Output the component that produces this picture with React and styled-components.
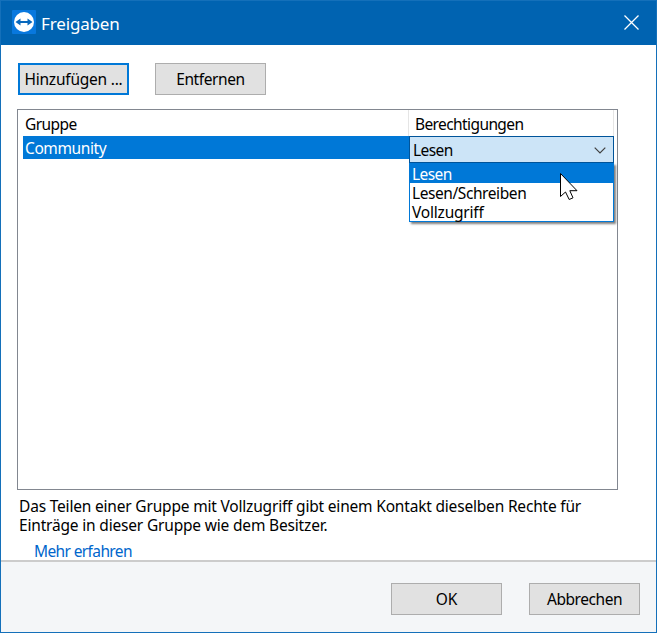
import React from 'react';
import styled, { createGlobalStyle, css } from 'styled-components';

const colors = {
	title: '#0063b1',
	frame: '#1470ba',
	accent: '#0078d7',
	link: '#0066cc',
	field: '#cce4f7',
	button: '#e1e1e1',
	buttonBorder: '#adadad',
	listBorder: '#828790',
	footer: '#f4f6f8'
};

const GlobalStyle = createGlobalStyle`
	* {
		box-sizing: border-box;
	}

	body {
		margin: 0;
		overflow: hidden;
	}
`;

const Dialog = styled.main`
	width: 657px;
	height: 633px;
	display: flex;
	flex-direction: column;
	border: 1px solid ${colors.frame};
	background: white;
	color: black;
	font: 15.5px/19px 'Noto Sans', sans-serif;
	white-space: nowrap;
`;

const Text = styled.span`
	display: block;
	width: max-content;
	letter-spacing: ${props => props.$spacing || 0}px;
`;

const TitleBar = styled.header`
	height: 44px;
	flex: none;
	display: flex;
	align-items: center;
	padding: 0 17px 2px 11px;
	background: ${colors.title};
	color: white;
`;

const Title = styled.h1`
	flex: 1;
	margin: 2px 0 0 5px;
	font-size: 17px;
	font-weight: 400;
`;

const CloseButton = styled.button`
	display: flex;
	padding: 0;
	border: 0;
	background: none;
`;

const Content = styled.section`
	height: 515px;
	flex: none;
	padding: 18px 38px 0 16px;
`;

const Toolbar = styled.div`
	display: flex;
	gap: 26px;
	padding-left: 1px;
`;

const Button = styled.button`
	width: 111px;
	height: 32px;
	display: flex;
	align-items: center;
	justify-content: center;
	padding: 0;
	border: 1px solid ${colors.buttonBorder};
	background: ${colors.button};
	color: black;
	font: inherit;
	${props =>
		props.$focused &&
		css`
			border: 2px solid ${colors.accent};
		`};
`;

const List = styled.div`
	height: 381px;
	display: grid;
	grid-template-columns: 386px 205px;
	grid-template-rows: 26px 27px;
	margin-top: 14px;
	padding-left: 5px;
	border: 1px solid ${colors.listBorder};
`;

const ColumnHeader = styled.div`
	padding: 5px 0 0 2px;
	${props =>
		props.$divided &&
		css`
			margin-left: -1px;
			padding-left: 6px;
			border-left: 1px solid #e5e5e5;
			border-right: 1px solid #e5e5e5;
		`};
`;

const SelectedCell = styled.div`
	height: 23px;
	padding: 3px 2px;
	background: ${colors.accent};
	color: white;
`;

const Select = styled.div`
	position: relative;
	height: 27px;
	display: flex;
	align-items: center;
	justify-content: space-between;
	padding: 1px 7px 0 3px;
	border: 1px solid #00549a;
	background: ${colors.field};
`;

const Options = styled.div`
	position: absolute;
	top: 26px;
	left: -1px;
	width: 205px;
	height: 59px;
	border: 1px solid ${colors.accent};
	background: white;
	box-shadow: 2px 2px 2px rgba(0, 0, 0, 0.5);
`;

const Option = styled.div`
	height: 19px;
	padding: 2px 0 0 2px;
	background: ${props => (props.$active ? colors.accent : 'white')};
	color: ${props => (props.$active ? 'white' : 'black')};
	line-height: 17px;
`;

const Cursor = styled.svg`
	position: absolute;
	top: 35px;
	left: 149px;
	z-index: 1;
`;

const Hint = styled.p`
	margin: 7px 0 0 2px;
`;

const Link = styled.a`
	display: block;
	margin: 7px 0 0 17px;
	color: ${colors.link};
`;

const Footer = styled.footer`
	flex: 1;
	display: flex;
	justify-content: flex-end;
	gap: 27px;
	padding: 21px 16px 0 0;
	border-top: 2px solid #cccccc;
	background: ${colors.footer};
`;

const AppIcon = () => (
	<svg width="24" height="24" viewBox="0 0 24 24">
		<rect width="24" height="24" rx="1" fill="#0878de" />
		<circle cx="12" cy="12" r="10" fill="white" />
		<path d="M3.5 12 8.5 8.5V11H15.5V8.5L20.5 12 15.5 15.5V13H8.5V15.5Z" fill="#0868bd" />
	</svg>
);

const CloseIcon = () => (
	<svg width="15" height="15" viewBox="0 0 15 15">
		<path d="M.5.5 14.5 14.5M14.5.5.5 14.5" stroke="white" strokeWidth="1.3" />
	</svg>
);

const Chevron = () => (
	<svg width="12" height="7" viewBox="0 0 12 7">
		<path d="M.7.7 6 6 11.3.7" fill="none" stroke="#404040" strokeWidth="1.2" />
	</svg>
);

const App = () => (
	<>
		<GlobalStyle />
		<Dialog>
			<TitleBar>
				<AppIcon />
				<Title>
					<Text $spacing={-0.15}>Freigaben</Text>
				</Title>
				<CloseButton aria-label="Schließen">
					<CloseIcon />
				</CloseButton>
			</TitleBar>
			<Content>
				<Toolbar>
					<Button $focused>
						<Text $spacing={-0.22}>Hinzufügen ...</Text>
					</Button>
					<Button>
						<Text $spacing={-0.4}>Entfernen</Text>
					</Button>
				</Toolbar>
				<List>
					<ColumnHeader>
						<Text $spacing={-0.55}>Gruppe</Text>
					</ColumnHeader>
					<ColumnHeader $divided>
						<Text $spacing={-0.6}>Berechtigungen</Text>
					</ColumnHeader>
					<SelectedCell>
						<Text $spacing={-0.4}>Community</Text>
					</SelectedCell>
					<Select>
						<Text $spacing={-0.6}>Lesen</Text>
						<Chevron />
						<Options>
							<Option $active>
								<Text $spacing={-0.6}>Lesen</Text>
							</Option>
							<Option>
								<Text $spacing={-0.42}>Lesen/Schreiben</Text>
							</Option>
							<Option>
								<Text $spacing={-0.2}>Vollzugriff</Text>
							</Option>
						</Options>
						<Cursor width="20" height="29" viewBox="0 0 20 29">
							<path
								d="M1.5 1.5V24.5L6.5 20 10.2 27.5 14 25.8 10.8 18.7H18Z"
								fill="white"
								stroke="black"
							/>
						</Cursor>
					</Select>
				</List>
				<Hint>
					<Text $spacing={-0.19}>
						Das Teilen einer Gruppe mit Vollzugriff gibt einem Kontakt dieselben Rechte für
					</Text>
					<Text $spacing={-0.18}>Einträge in dieser Gruppe wie dem Besitzer.</Text>
				</Hint>
				<Link>
					<Text $spacing={-0.62}>Mehr erfahren</Text>
				</Link>
			</Content>
			<Footer>
				<Button>
					<Text>OK</Text>
				</Button>
				<Button>
					<Text $spacing={-0.45}>Abbrechen</Text>
				</Button>
			</Footer>
		</Dialog>
	</>
);

export default App;
